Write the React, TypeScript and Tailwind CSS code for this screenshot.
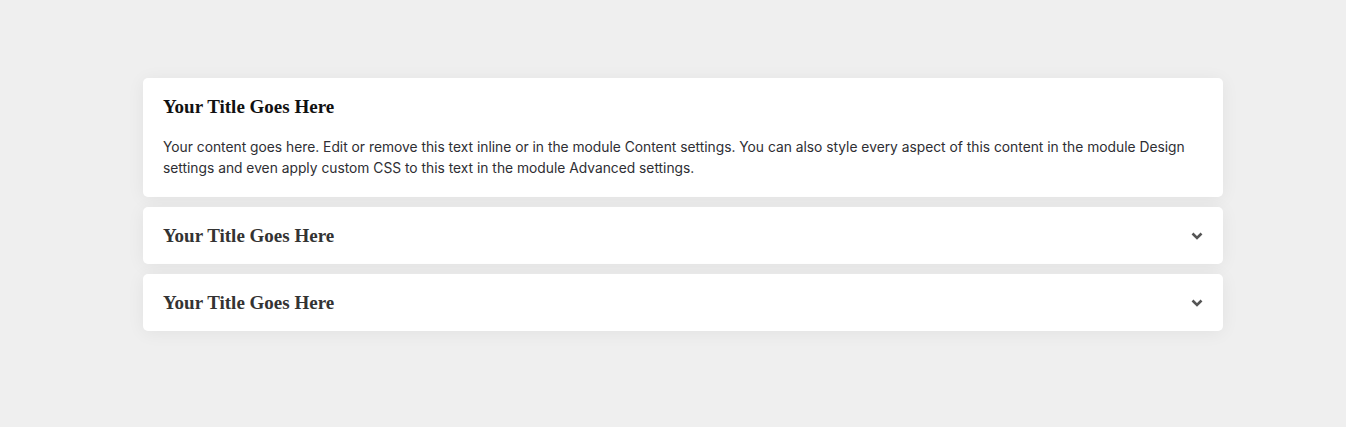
const items = [
  {
    title: 'Your Title Goes Here',
    open: true,
    body: 'Your content goes here. Edit or remove this text inline or in the module Content settings. You can also style every aspect of this content in the module Design settings and even apply custom CSS to this text in the module Advanced settings.',
  },
  { title: 'Your Title Goes Here', open: false },
  { title: 'Your Title Goes Here', open: false },
]

function Chevron() {
  return (
    <svg width="12" height="8" viewBox="0 0 12 8" className="text-[#555]">
      <polyline points="1.5,1.5 6,6 10.5,1.5" fill="none" stroke="currentColor" strokeWidth="2.6" strokeLinejoin="miter" />
    </svg>
  )
}

export default function App() {
  return (
    <div className="min-h-[427px] w-full bg-[#efefef] pt-[78px]">
      <div className="ml-[143px] flex w-[1080px] flex-col gap-[10px]">
        {items.map((item, i) => (
          <div
            key={i}
            className={`rounded-[5px] bg-white px-5 pt-5 shadow-[0_2px_18px_rgba(0,0,0,0.06)] ${
              item.open ? 'pb-[18px]' : 'pb-5'
            }`}
          >
            <div className="flex items-center justify-between">
              <h5
                className={`font-['Liberation_Serif',serif] text-[19px] font-bold leading-[17px] ${
                  item.open ? 'text-[#111]' : 'text-[#333]'
                }`}
              >
                {item.title}
              </h5>
              {!item.open && <Chevron />}
            </div>
            {item.open && (
              <p className="mt-[22px] font-['Inter',sans-serif] text-[13.8px] leading-[21px] text-[#2e2e33]">
                {item.body}
              </p>
            )}
          </div>
        ))}
      </div>
    </div>
  )
}
